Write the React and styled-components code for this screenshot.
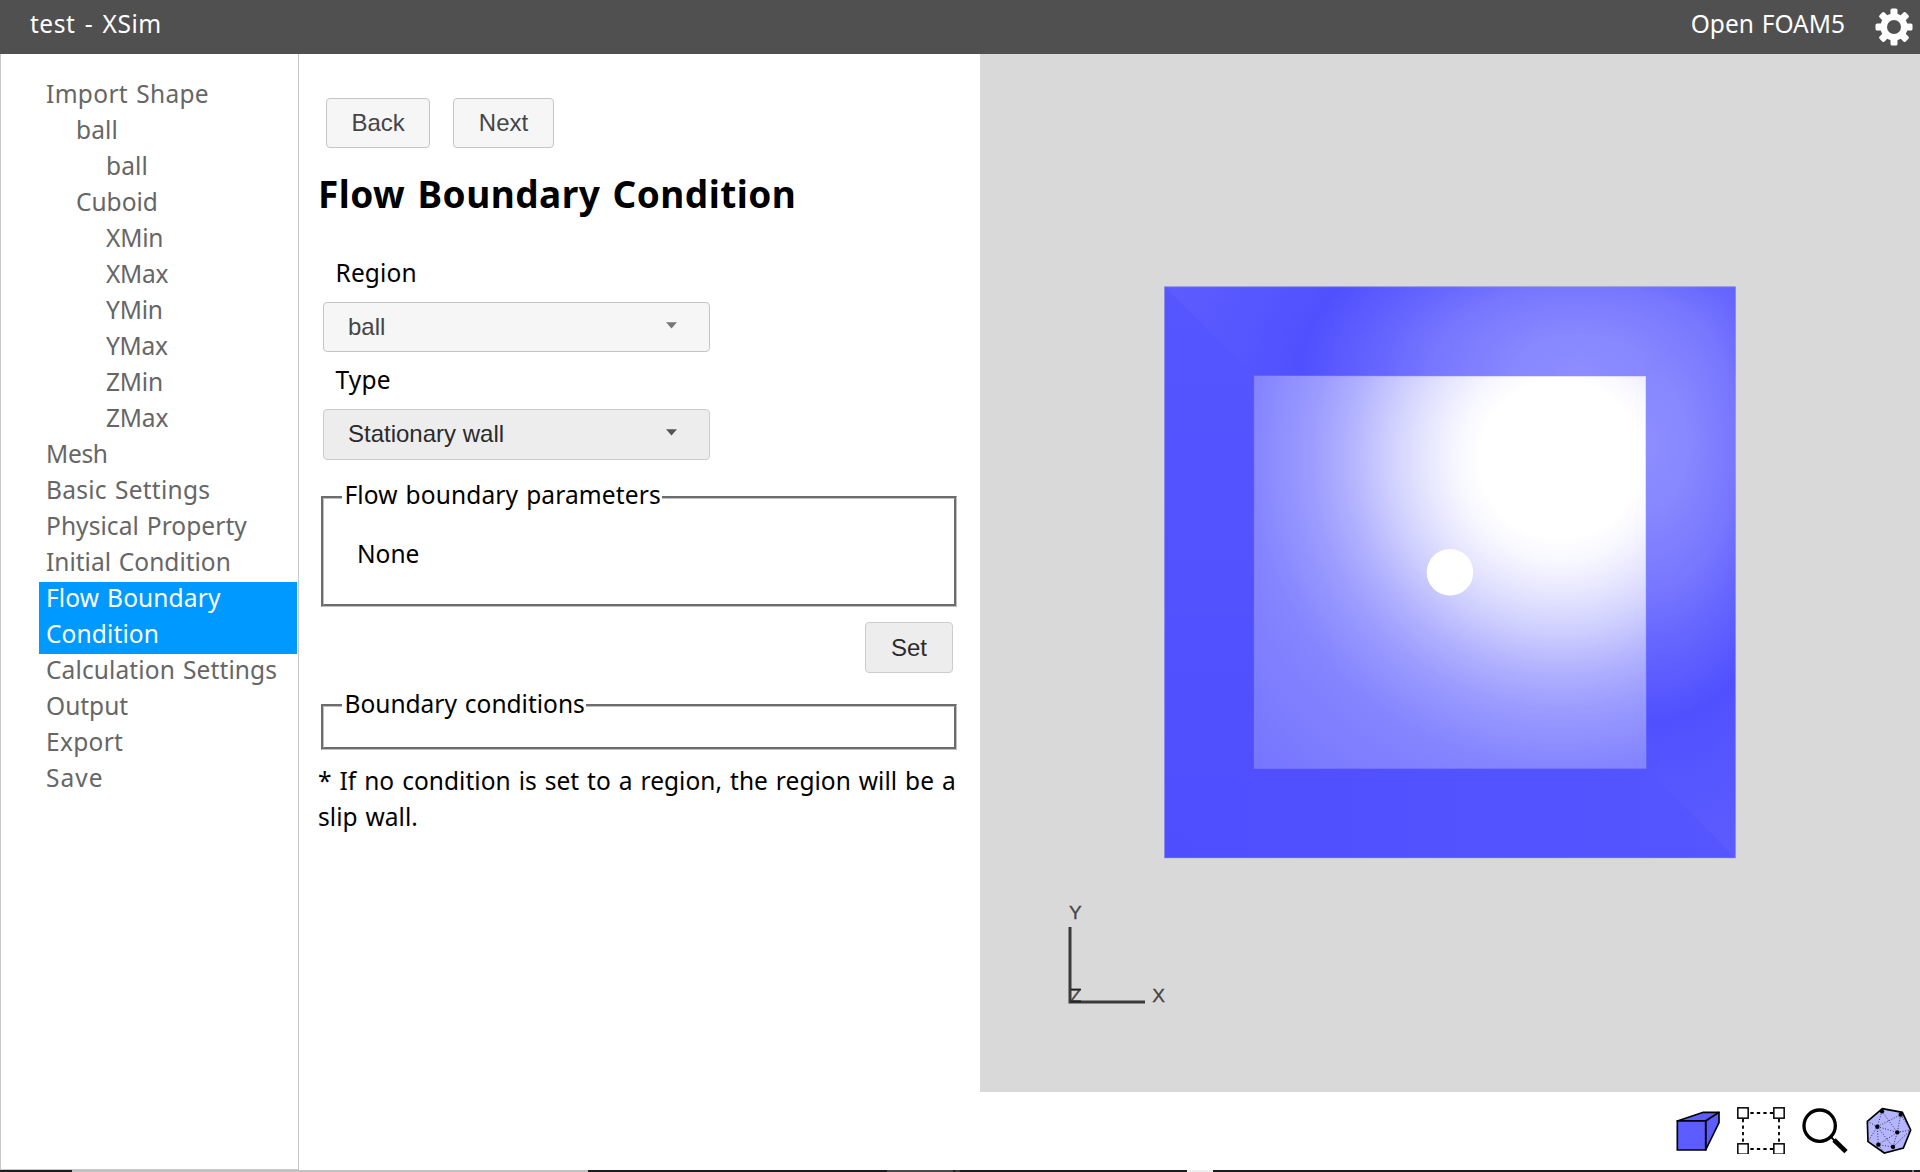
import React from 'react';
import styled, { createGlobalStyle } from 'styled-components';

const UI_FONT = '"Noto Sans", "Open Sans", sans-serif';
const WIDGET_FONT = '"Liberation Sans", Arial, sans-serif';

const GlobalStyle = createGlobalStyle`
  * { box-sizing: border-box; }
  body { margin: 0; background: #fff; }
`;

const Page = styled.div`
  display: flex;
  flex-direction: column;
  width: 1920px;
  height: 1172px;
  overflow: hidden;
  background: #fff;
  color: #000;
  font: 24.5px/36px ${UI_FONT};
  word-spacing: 1.5px;
`;

const Header = styled.header`
  display: flex;
  flex: 0 0 54px;
  align-items: flex-start;
  justify-content: space-between;
  padding: 6px 7px 0 30px;
  background: #505050;
  color: #fff;
`;

const AppTitle = styled.span`
  letter-spacing: 0.5px;
  word-spacing: 2.6px;
`;

const HeaderTools = styled.div`
  display: flex;
  gap: 30px;
`;

const GearIcon = styled.svg`
  width: 38px;
  height: 38px;
  margin-top: 1.5px;
`;

const Body = styled.div`
  display: flex;
  flex: 1;
  min-height: 0;
`;

const Sidebar = styled.nav`
  flex: 0 0 299px;
  padding: 24px 1px 0 38px;
  border: 1px solid #c8c8c8;
  border-top: 0;
`;

const Tree = styled.ul`
  margin: 0;
  padding: 0;
  list-style: none;
`;

const TreeItem = styled.li`
  display: flow-root;
  padding: 0 0 2px ${(p) => 7 + p.$level * 30}px;
  background: ${(p) => (p.$active ? '#0099ff' : 'transparent')};
  color: ${(p) => (p.$active ? '#fff' : '#666')};
  letter-spacing: ${(p) => p.$tracking}px;
`;

const TreeLabel = styled.span`
  display: block;
  margin-top: -2px;
`;

const SettingsPanel = styled.main`
  display: flex;
  flex: 0 0 681px;
  flex-direction: column;
  align-items: stretch;
  padding: 44px 23px 0 18px;
`;

const ButtonRow = styled.div`
  display: flex;
  gap: 23px;
  margin-left: 9px;
`;

const Button = styled.button`
  height: ${(p) => (p.$raised ? 51 : 50)}px;
  padding: 0 ${(p) => (p.$raised ? 25 : 24.5)}px;
  border: 1px solid ${(p) => (p.$raised ? '#ccc' : '#c5c5c5')};
  border-radius: 4px;
  background: ${(p) => (p.$raised ? '#ededed' : '#f6f6f6')};
  color: ${(p) => (p.$raised ? '#2b2b2b' : '#454545')};
  font: 24px ${WIDGET_FONT};
`;

const Title = styled.h1`
  margin: 21px 0 36px 1px;
  font-size: 37px;
  font-weight: 700;
  line-height: 50px;
  letter-spacing: 0.45px;
  word-spacing: 2.3px;
`;

const Label = styled.label`
  margin: 0 0 11px 18.5px;
  letter-spacing: 0.15px;
`;

const SelectBox = styled.div`
  display: flex;
  align-items: center;
  justify-content: space-between;
  width: 387px;
  height: ${(p) => (p.$raised ? 51 : 50)}px;
  margin: 0 0 ${(p) => (p.$raised ? 19 : 10)}px 6px;
  padding: 0 32px ${(p) => (p.$raised ? 1 : 0)}px 24px;
  border: 1px solid ${(p) => (p.$raised ? '#ccc' : '#c5c5c5')};
  border-radius: 4px;
  background: ${(p) => (p.$raised ? '#ededed' : '#f6f6f6')};
  color: ${(p) => (p.$raised ? '#2b2b2b' : '#454545')};
  font: 24px ${WIDGET_FONT};
  word-spacing: 0;
`;

const Arrow = styled.svg`
  width: 11px;
  height: 7px;
  margin-bottom: 4px;
  fill: ${(p) => (p.$raised ? '#555' : '#777')};
`;

const Group = styled.fieldset`
  height: ${(p) => p.$height}px;
  margin: 0 0 0 4px;
  padding: 0 18px;
  border: 3px groove #c0c0c0;
`;

const Legend = styled.legend`
  height: 37px;
  padding: ${(p) => p.$drop || 0}px 1px 0 2.5px;
  line-height: 31px;
  letter-spacing: ${(p) => p.$tracking}px;
`;

const GroupText = styled.div`
  margin: 20px 0 0 15px;
`;

const SetRow = styled.div`
  display: flex;
  justify-content: flex-end;
  margin: 15px 4px 14px 0;
`;

const Note = styled.p`
  margin: 13px -8px 0 1px;
  letter-spacing: 0.04px;
`;

const ViewColumn = styled.section`
  display: flex;
  flex: 1;
  flex-direction: column;
`;

const Scene = styled.svg`
  display: block;
  width: 940px;
  height: 1038px;
  background: #d9d9d9;
`;

const AxisText = styled.text`
  fill: #444;
  stroke: #444;
  stroke-width: 0.3px;
  font: 19px ${WIDGET_FONT};
`;

const ViewTools = styled.div`
  display: flex;
  justify-content: flex-end;
  gap: 16px;
  padding: 14px 7px 0 0;
`;

const ToolIcon = styled.svg`
  width: 48px;
  height: 48px;
`;

const Taskbar = styled.footer`
  display: flex;
  flex: 0 0 2px;
`;

const TaskbarPart = styled.span`
  flex: 0 0 ${(p) => p.$width}px;
  background: ${(p) => p.$color};
`;

const tree = [
  ['Import Shape', 0, 0.32],
  ['ball', 1, 0.1],
  ['ball', 2, 0.1],
  ['Cuboid', 1, 0],
  ['XMin', 2, -0.2],
  ['XMax', 2, -0.3],
  ['YMin', 2, -0.2],
  ['YMax', 2, -0.3],
  ['ZMin', 2, -0.2],
  ['ZMax', 2, -0.2],
  ['Mesh', 0, -0.3],
  ['Basic Settings', 0, 0.26],
  ['Physical Property', 0, 0.06],
  ['Initial Condition', 0, 0],
  ['Flow Boundary Condition', 0, 0.12],
  ['Calculation Settings', 0, 0.12],
  ['Output', 0, 0],
  ['Export', 0, 0.3],
  ['Save', 0, 1],
];

const taskbar = [
  [72, '#1c1c1f'], [516, '#c1c1c1'], [299, '#1c1c1f'], [66, '#4b4b4b'], [2, '#1c1c1f'],
  [5, '#3a3a3a'], [227, '#1c1c1f'], [26, '#eee'], [699, '#1c1c1f'], [2, '#777'], [6, '#1c1c1f'],
];

function Gear() {
  return (
    <GearIcon viewBox="-19 -19 38 38">
      <g fill="#fff">
        {[0, 45, 90, 135].map((a) => (
          <rect key={a} x="-3.5" y="-18.5" width="7" height="37" rx="1.6" transform={`rotate(${a})`} />
        ))}
        <circle r="13.6" />
      </g>
      <circle r="7" fill="#505050" />
    </GearIcon>
  );
}

function DropArrow({ raised }) {
  return (
    <Arrow $raised={raised} viewBox="0 0 11 7">
      <path d="M0 .3h11L5.5 6.6z" />
    </Arrow>
  );
}

function CubeView() {
  return (
    <Scene viewBox="980 54 940 1038">
      <defs>
        <radialGradient id="back" gradientUnits="userSpaceOnUse" cx="1560" cy="459" r="440">
          <stop offset="0.18" stopColor="#fff" />
          <stop offset="0.24" stopColor="#f6f6ff" />
          <stop offset="0.31" stopColor="#e5e5ff" />
          <stop offset="0.39" stopColor="#cfcfff" />
          <stop offset="0.48" stopColor="#b2b2ff" />
          <stop offset="0.57" stopColor="#9b9bff" />
          <stop offset="0.7" stopColor="#8585ff" />
          <stop offset="1" stopColor="#7474ff" />
        </radialGradient>
        <radialGradient id="top" gradientUnits="userSpaceOnUse" cx="0" cy="0" r="440" gradientTransform="translate(1579 371) scale(1 .58)">
          <stop offset="0" stopColor="#8d8dff" />
          <stop offset="0.15" stopColor="#8787ff" />
          <stop offset="0.33" stopColor="#7777ff" />
          <stop offset="0.45" stopColor="#6666ff" />
          <stop offset="0.55" stopColor="#5a5aff" />
          <stop offset="0.63" stopColor="#5050ff" />
          <stop offset="0.76" stopColor="#5656ff" />
          <stop offset="1" stopColor="#5c5cff" />
        </radialGradient>
        <radialGradient id="right" href="#top" gradientUnits="userSpaceOnUse" cx="0" cy="0" r="440" gradientTransform="translate(1651.5 443.5) scale(.58 1)" />
        <linearGradient id="left" x1="0" y1="0" x2="0" y2="1">
          <stop offset="0" stopColor="#5656ff" />
          <stop offset="1" stopColor="#4e4eff" />
        </linearGradient>
        <linearGradient id="bottom" x1="0" y1="0" x2="1" y2="0">
          <stop offset="0" stopColor="#4e4eff" />
          <stop offset="1" stopColor="#5656ff" />
        </linearGradient>
      </defs>
      <rect x="1164.5" y="286.7" width="571" height="571.3" fill="#5252ff" />
      <path d="M1164.5 286.7L1254.3 376v392.3L1164.5 858z" fill="url(#left)" />
      <path d="M1164.5 858L1254.3 768.3H1646L1735.5 858z" fill="url(#bottom)" />
      <path d="M1164.5 286.7H1735.5V376H1254.3z" fill="url(#top)" />
      <path d="M1735.5 286.7V858L1646 768.3V376z" fill="url(#right)" />
      <rect x="1254.3" y="376" width="391.7" height="392.3" fill="url(#back)" />
      <rect x="1254.3" y="376" width="391.7" height="392.3" fill="none" stroke="#8f8fff" strokeOpacity=".5" />
      <rect x="1164.5" y="286.7" width="571" height="571.3" fill="none" stroke="#a0a0f0" strokeOpacity=".5" />
      <circle cx="1450" cy="572.3" r="23.3" fill="#fff" />
      <AxisText x="1069" y="919.3">Y</AxisText>
      <AxisText x="1152.3" y="1002">X</AxisText>
      <AxisText x="1069.8" y="1002">Z</AxisText>
      <path d="M1070 927V1002H1145" fill="none" stroke="#3a3a3a" strokeWidth="3" />
      <path d="M1071 989.5h10M1071 1001.5h10" stroke="#222" strokeWidth="1.4" />
    </Scene>
  );
}

function SolidCube() {
  return (
    <ToolIcon viewBox="99 108 144 144">
      <g fill="#5c5cff" stroke="#000" strokeWidth="5" strokeLinejoin="round">
        <path d="M112 153L190 127H237L197 153z" />
        <path d="M197 153L237 127V158L197 240z" />
        <path d="M112 153H197V240H112z" strokeLinejoin="miter" />
      </g>
    </ToolIcon>
  );
}

function SelectionFrame() {
  return (
    <ToolIcon viewBox="291 108 144 144">
      <g stroke="#000" strokeWidth="5.5">
        <path d="M331 129H402M331 237H402" strokeDasharray="10 9.5" />
        <path d="M309 147V220M417 147V220" strokeDasharray="10 9.5" />
      </g>
      <g fill="#fff" stroke="#000" strokeWidth="4.5">
        {[[309, 129], [417, 129], [309, 237], [417, 237]].map(([x, y]) => (
          <rect key={`${x}-${y}`} x={x - 15.5} y={y - 15.5} width="31" height="31" />
        ))}
      </g>
    </ToolIcon>
  );
}

function Magnifier() {
  return (
    <ToolIcon viewBox="483 108 144 144">
      <circle cx="539" cy="167" r="47" fill="none" stroke="#000" strokeWidth="10" />
      <path d="M572 200L586 214" stroke="#000" strokeWidth="6" />
      <path d="M582 210L618 245" stroke="#000" strokeWidth="14" />
    </ToolIcon>
  );
}

function MeshBall() {
  const nodes = [[726, 124], [782, 134], [712, 170], [772, 187], [715, 224], [759, 231]];
  return (
    <ToolIcon viewBox="675 108 144 144">
      <path d="M727 116L787 127L812 180L790 234L733 249L684 215L682 154z" fill="#b4b4ff" stroke="#000" strokeWidth="5" />
      <path
        d="M726 124L712 170L782 134L772 187L712 170L715 224L772 187L759 231L715 224M682 154L712 170L684 215M772 187L812 180L759 231L712 170M726 124L772 187M715 224L733 249M782 134L812 180"
        fill="none"
        stroke="#223"
        strokeWidth="2.6"
        strokeDasharray="3 5"
      />
      {nodes.map(([x, y]) => <circle key={x} cx={x} cy={y} r="6.5" />)}
    </ToolIcon>
  );
}

export default function App() {
  return (
    <Page>
      <GlobalStyle />
      <Header>
        <AppTitle>test - XSim</AppTitle>
        <HeaderTools>
          <span>Open FOAM5</span>
          <Gear />
        </HeaderTools>
      </Header>
      <Body>
        <Sidebar>
          <Tree>
            {tree.map(([name, level, tracking], i) => (
              <TreeItem key={i} $level={level} $tracking={tracking} $active={name === 'Flow Boundary Condition'}>
                <TreeLabel>{name}</TreeLabel>
              </TreeItem>
            ))}
          </Tree>
        </Sidebar>
        <SettingsPanel>
          <ButtonRow>
            <Button>Back</Button>
            <Button>Next</Button>
          </ButtonRow>
          <Title>Flow Boundary Condition</Title>
          <Label>Region</Label>
          <SelectBox>ball<DropArrow /></SelectBox>
          <Label>Type</Label>
          <SelectBox $raised>Stationary wall<DropArrow raised /></SelectBox>
          <Group $height={128}>
            <Legend $tracking={0.12}>Flow boundary parameters</Legend>
            <GroupText>None</GroupText>
          </Group>
          <SetRow>
            <Button $raised>Set</Button>
          </SetRow>
          <Group $height={63}>
            <Legend $tracking={0} $drop={1}>Boundary conditions</Legend>
          </Group>
          <Note>* If no condition is set to a region, the region will be a slip wall.</Note>
        </SettingsPanel>
        <ViewColumn>
          <CubeView />
          <ViewTools>
            <SolidCube />
            <SelectionFrame />
            <Magnifier />
            <MeshBall />
          </ViewTools>
        </ViewColumn>
      </Body>
      <Taskbar>
        {taskbar.map(([width, color], i) => <TaskbarPart key={i} $width={width} $color={color} />)}
      </Taskbar>
    </Page>
  );
}
